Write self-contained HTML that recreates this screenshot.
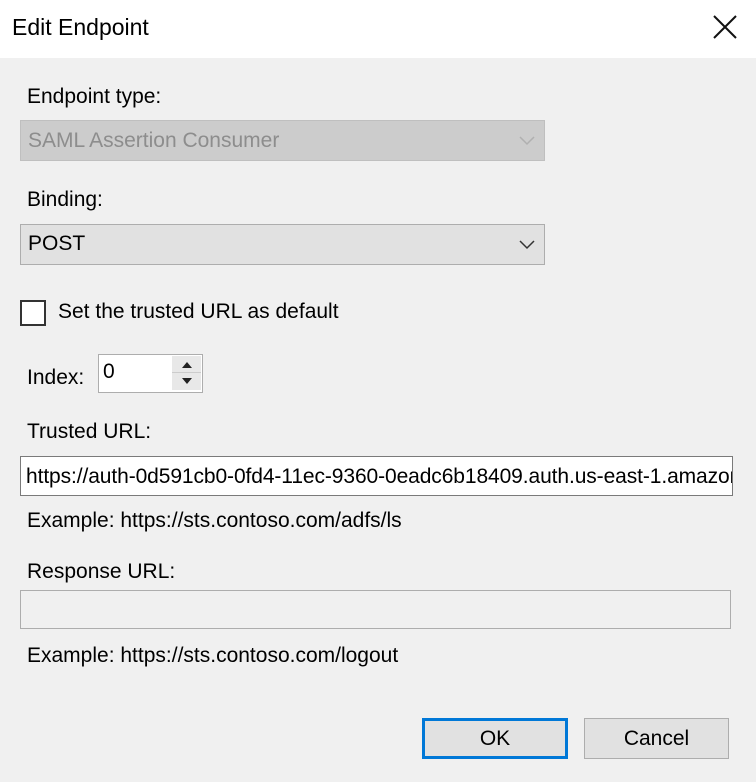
<!DOCTYPE html>
<html><head><style>
body{margin:0;width:756px;height:782px;background:#f0f0f0;font-family:"Liberation Sans",sans-serif;font-size:21px;color:#000;position:relative;overflow:hidden}
.a{position:absolute;white-space:nowrap}
.t{line-height:24px}
</style></head><body>
<div class="a" style="left:0;top:0;width:756px;height:58px;background:#fff"></div>
<div class="a t" style="left:12px;top:15px;font-size:23px">Edit Endpoint</div>
<svg class="a" style="left:712px;top:15px" width="26" height="24"><path d="M2 1L24 23M24 1L2 23" stroke="#111" stroke-width="2" fill="none"/></svg>

<div class="a t" style="left:27px;top:85px">Endpoint type:</div>
<div class="a" style="left:20px;top:120px;width:523px;height:39px;background:#cccccc;border:1px solid #bfbfbf"></div>
<div class="a t" style="left:28px;top:129px;color:#8d8d8d">SAML Assertion Consumer</div>
<svg class="a" style="left:519px;top:136px" width="16" height="10"><path d="M1 1L8 8L15 1" stroke="#b0b0b0" stroke-width="1.5" fill="none"/></svg>

<div class="a t" style="left:27px;top:188px">Binding:</div>
<div class="a" style="left:20px;top:224px;width:523px;height:39px;background:#e1e1e1;border:1px solid #adadad"></div>
<div class="a t" style="left:28px;top:232px">POST</div>
<svg class="a" style="left:519px;top:240px" width="16" height="10"><path d="M1 1L8 8L15 1" stroke="#333" stroke-width="1.5" fill="none"/></svg>

<div class="a" style="left:20px;top:300px;width:22px;height:22px;background:#fff;border:2px solid #333"></div>
<div class="a t" style="left:58px;top:300px">Set the trusted URL as default</div>

<div class="a t" style="left:27px;top:366px">Index:</div>
<div class="a" style="left:98px;top:354px;width:103px;height:37px;background:#fff;border:1px solid #adadad"></div>
<div class="a t" style="left:103px;top:360px">0</div>
<div class="a" style="left:172px;top:356px;width:29px;height:16px;background:#e8e8e8;border-bottom:1px solid #ccc"></div>
<div class="a" style="left:172px;top:373px;width:29px;height:17px;background:#e8e8e8"></div>
<svg class="a" style="left:172px;top:356px" width="30" height="34"><path d="M10 12L15 6L20 12Z M10 22L15 28L20 22Z" fill="#222"/></svg>

<div class="a t" style="left:27px;top:420px">Trusted URL:</div>
<div class="a" style="left:20px;top:456px;width:711px;height:38px;background:#fff;border:1px solid #7a7a7a;overflow:hidden"><div class="a t" style="left:5px;top:8px;letter-spacing:-0.1px">https://auth-0d591cb0-0fd4-11ec-9360-0eadc6b18409.auth.us-east-1.amazoncognito.com</div></div>

<div class="a t" style="left:27px;top:509px">Example: https://sts.contoso.com/adfs/ls</div>

<div class="a t" style="left:27px;top:560px">Response URL:</div>
<div class="a" style="left:20px;top:590px;width:709px;height:37px;background:#f0f0f0;border:1px solid #adadad"></div>

<div class="a t" style="left:27px;top:644px">Example: https://sts.contoso.com/logout</div>

<div class="a" style="left:422px;top:718px;width:140px;height:35px;background:#e1e1e1;border:3px solid #0078d7"></div>
<div class="a t" style="left:422px;top:727px;width:146px;text-align:center">OK</div>
<div class="a" style="left:584px;top:718px;width:143px;height:39px;background:#e1e1e1;border:1px solid #adadad"></div>
<div class="a t" style="left:584px;top:727px;width:145px;text-align:center">Cancel</div>
</body></html>
